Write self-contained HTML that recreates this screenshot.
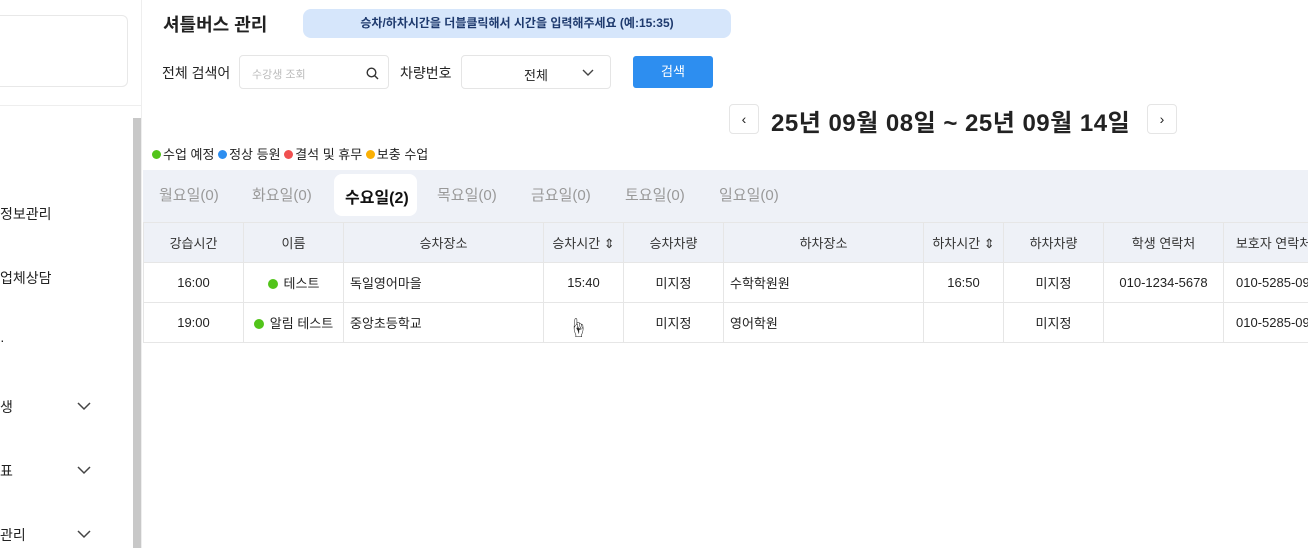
<!DOCTYPE html><html><head><meta charset="utf-8"><style>
body{margin:0;width:1308px;height:548px;overflow:hidden;background:#fff;font-family:"Liberation Sans","Noto Sans CJK KR",sans-serif;position:relative;color:#222}
.a{position:absolute}
table{border-collapse:collapse;position:absolute;left:143px;top:222px;font-size:13px;table-layout:fixed;width:1180px}
td,th{border:1px solid #e6e6e6;text-align:center;padding:0;height:39px;white-space:nowrap;overflow:hidden}
th{background:#eef1f7;font-weight:normal;color:#333}
td.l{text-align:left;padding-left:6px}
.dot{display:inline-block;width:10px;height:10px;border-radius:50%;background:#52c41a;margin-right:6px;vertical-align:-1px}
.ld{display:inline-block;width:9px;height:9px;border-radius:50%;margin:0 2px 0 0;vertical-align:0}
.tab{position:absolute;top:184px;font-size:15px;color:#999}
</style></head><body>
<div class="a" style="left:-10px;top:15px;width:136px;height:70px;border:1px solid #e8e8e8;border-radius:6px"></div>
<div class="a" style="left:0;top:105px;width:141px;height:1px;background:#eee"></div>
<div class="a" style="left:141px;top:0;width:1px;height:548px;background:#eee"></div>
<div class="a" style="left:133px;top:118px;width:8px;height:430px;background:#c8c8c8"></div>
<div class="a" style="left:0;top:204px;font-size:14px">정보관리</div>
<div class="a" style="left:0;top:268px;font-size:14px">업체상담</div>
<div class="a" style="left:0;top:332px;font-size:14px">·</div>
<div class="a" style="left:0;top:397px;font-size:14px">생</div>
<div class="a" style="left:0;top:461px;font-size:14px">표</div>
<div class="a" style="left:0;top:525px;font-size:14px">관리</div>
<svg class="a" style="left:77px;top:402px" width="14" height="9"><path d="M1 1l6 6 6-6" stroke="#444" fill="none" stroke-width="1.5"/></svg>
<svg class="a" style="left:77px;top:466px" width="14" height="9"><path d="M1 1l6 6 6-6" stroke="#444" fill="none" stroke-width="1.5"/></svg>
<svg class="a" style="left:77px;top:530px" width="14" height="9"><path d="M1 1l6 6 6-6" stroke="#444" fill="none" stroke-width="1.5"/></svg>

<div class="a" style="left:163px;top:11px;font-size:18px;font-weight:bold">셔틀버스 관리</div>
<div class="a" style="left:303px;top:9px;width:428px;height:29px;background:#d6e6fb;border-radius:8px;font-size:12px;text-align:center;line-height:29px;font-weight:bold;color:#1e3a6e">승차/하차시간을 더블클릭해서 시간을 입력해주세요 (예:15:35)</div>
<div class="a" style="left:162px;top:63px;font-size:14px">전체 검색어</div>
<div class="a" style="left:239px;top:55px;width:150px;height:34px;border:1px solid #e5e5e5;border-radius:4px;box-sizing:border-box"><span class="a" style="left:12px;top:10px;font-size:11px;color:#bbb">수강생 조회</span><svg class="a" style="left:126px;top:11px" width="13" height="13"><circle cx="5.5" cy="5.5" r="4.3" stroke="#333" fill="none" stroke-width="1.4"/><path d="M8.5 8.5l3.5 3.5" stroke="#333" stroke-width="1.4"/></svg></div>
<div class="a" style="left:400px;top:63px;font-size:14px">차량번호</div>
<div class="a" style="left:461px;top:55px;width:150px;height:34px;border:1px solid #e5e5e5;border-radius:4px;box-sizing:border-box"><span class="a" style="left:62px;top:9px;font-size:13px">전체</span><svg class="a" style="left:120px;top:13px" width="12" height="8"><path d="M1 1l5 5 5-5" stroke="#444" fill="none" stroke-width="1.4"/></svg></div>
<div class="a" style="left:633px;top:56px;width:80px;height:32px;background:#2d8ef0;border-radius:3px;color:#fff;font-size:13px;text-align:center;line-height:32px">검색</div>
<div class="a" style="left:729px;top:104px;width:30px;height:30px;border:1px solid #e5e5e5;border-radius:4px;box-sizing:border-box;text-align:center;line-height:28px;font-size:14px">‹</div>
<div class="a" style="left:771px;top:103px;font-size:24px;letter-spacing:0.5px;font-weight:bold;white-space:nowrap">25년 09월 08일 ~ 25년 09월 14일</div>
<div class="a" style="left:1147px;top:104px;width:30px;height:30px;border:1px solid #e5e5e5;border-radius:4px;box-sizing:border-box;text-align:center;line-height:28px;font-size:14px">›</div>
<div class="a" style="left:152px;top:144px;font-size:13px"><span class="ld" style="background:#52c41a"></span>수업 예정 <span class="ld" style="background:#2d8ef0"></span>정상 등원 <span class="ld" style="background:#f05050"></span>결석 및 휴무 <span class="ld" style="background:#fab005"></span>보충 수업</div>

<div class="a" style="left:143px;top:170px;width:1165px;height:52px;background:#eef1f7"></div>
<div class="a" style="left:334px;top:174px;width:83px;height:42px;background:#fff;border-radius:8px"></div>
<span class="tab" style="left:159px">월요일(0)</span><span class="tab" style="left:252px">화요일(0)</span>
<span class="tab" style="left:345px;color:#111;font-weight:bold;font-size:16px">수요일(2)</span>
<span class="tab" style="left:437px">목요일(0)</span><span class="tab" style="left:531px">금요일(0)</span><span class="tab" style="left:625px">토요일(0)</span><span class="tab" style="left:719px">일요일(0)</span>

<table><colgroup><col style="width:100px"><col style="width:100px"><col style="width:200px"><col style="width:80px"><col style="width:100px"><col style="width:200px"><col style="width:80px"><col style="width:100px"><col style="width:120px"><col style="width:100px"></colgroup>
<tr><th>강습시간</th><th>이름</th><th>승차장소</th><th>승차시간 ⇕</th><th>승차차량</th><th>하차장소</th><th>하차시간 ⇕</th><th>하차차량</th><th>학생 연락처</th><th>보호자 연락처</th></tr>
<tr><td>16:00</td><td><span class="dot"></span>테스트</td><td class="l">독일영어마을</td><td>15:40</td><td>미지정</td><td class="l">수학학원원</td><td>16:50</td><td>미지정</td><td>010-1234-5678</td><td class="l" style="padding-left:12px">010-5285-0987</td></tr>
<tr><td>19:00</td><td><span class="dot"></span>알림 테스트</td><td class="l">중앙초등학교</td><td></td><td>미지정</td><td class="l">영어학원</td><td></td><td>미지정</td><td></td><td class="l" style="padding-left:12px">010-5285-0987</td></tr></table>
<div class="a" style="left:568px;top:312px;font-size:20px">☝</div>
</body></html>
